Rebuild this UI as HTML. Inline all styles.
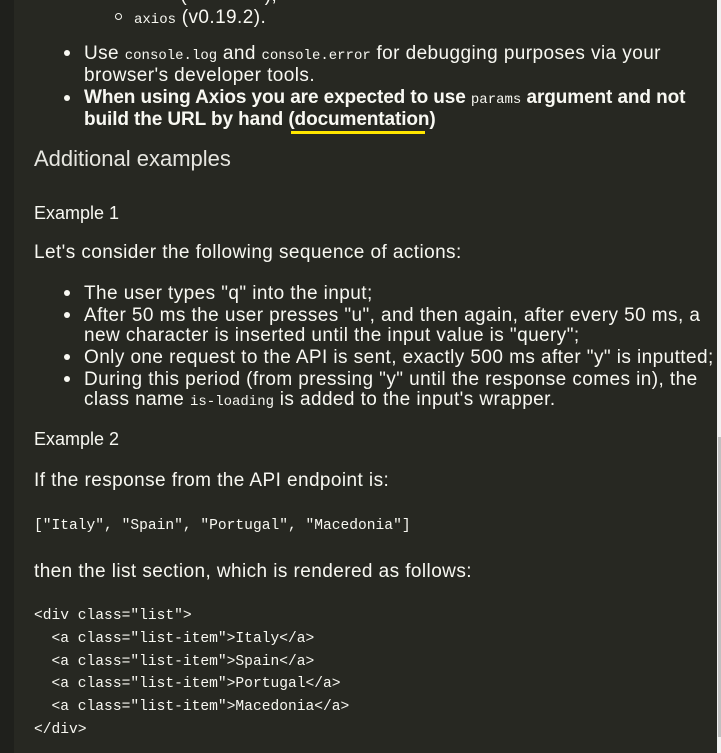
<!DOCTYPE html>
<html><head><meta charset="utf-8"><style>
html,body{margin:0;padding:0;width:721px;height:753px;overflow:hidden;background:#272822;}
body{position:relative;font-family:"Liberation Sans",sans-serif;color:#f8f8f2;}
.side{position:absolute;left:0;top:0;width:14px;height:753px;background:#1f201c;}
.sb{position:absolute;left:717px;top:0;width:4px;height:753px;background:#f1f1f1;}
.th{position:absolute;left:718px;top:437px;width:3px;height:300px;background:#c1c1c1;}
.t{position:absolute;white-space:nowrap;font-size:19px;letter-spacing:0.42px;line-height:22px;}
code{font-family:"Liberation Mono",monospace;font-size:14px;letter-spacing:0;font-weight:normal;}
.b{position:absolute;width:6px;height:6px;border-radius:50%;background:#f8f8f2;}
.m{position:absolute;white-space:pre;font-family:"Liberation Mono",monospace;font-size:14.6px;line-height:22.8px;}
</style></head><body>
<div class="side"></div>
<div class="sb"></div><div class="th"></div>
<div class="t" style="left:97px;top:-15px">———— (————),</div>
<div style="position:absolute;left:115px;top:13px;width:5px;height:5px;border:1.3px solid #f8f8f2;border-radius:50%"></div>
<div class="t" style="left:134px;top:7px"><code>axios</code> (v0.19.2).</div>
<div class="b" style="left:64px;top:50px"></div>
<div class="t" style="left:84px;top:43px">Use <code>console.log</code> and <code>console.error</code> for debugging purposes via your</div>
<div class="t" style="left:84px;top:65px">browser's developer tools.</div>
<div class="b" style="left:64px;top:95px"></div>
<div class="t" style="left:84px;top:87px;font-weight:bold;letter-spacing:-0.1px">When using Axios you are expected to use <code>params</code> argument and not</div>
<div class="t" style="left:84px;top:109px;font-weight:bold;letter-spacing:-0.1px">build the URL by hand (documentation)</div>
<div style="position:absolute;left:291px;top:131px;width:134px;height:3px;background:#ffe600"></div>
<div class="t" style="left:34px;top:148px;font-size:22px;letter-spacing:0;color:#e6e6e0">Additional examples</div>
<div class="t" style="left:34px;top:202px;font-size:18px;letter-spacing:0">Example 1</div>
<div class="t" style="left:34px;top:242px">Let's consider the following sequence of actions:</div>
<div class="b" style="left:64px;top:290px"></div>
<div class="t" style="left:84px;top:283px">The user types "q" into the input;</div>
<div class="b" style="left:64px;top:312px"></div>
<div class="t" style="left:84px;top:305px">After 50 ms the user presses "u", and then again, after every 50 ms, a</div>
<div class="t" style="left:84px;top:325px">new character is inserted until the input value is "query";</div>
<div class="b" style="left:64px;top:354px"></div>
<div class="t" style="left:84px;top:347px">Only one request to the API is sent, exactly 500 ms after "y" is inputted;</div>
<div class="b" style="left:64px;top:376px"></div>
<div class="t" style="left:84px;top:369px">During this period (from pressing "y" until the response comes in), the</div>
<div class="t" style="left:84px;top:389px">class name <code>is-loading</code> is added to the input's wrapper.</div>
<div class="t" style="left:34px;top:428px;font-size:18px;letter-spacing:0">Example 2</div>
<div class="t" style="left:34px;top:470px">If the response from the API endpoint is:</div>
<div class="m" style="left:34px;top:515px">["Italy", "Spain", "Portugal", "Macedonia"]</div>
<div class="t" style="left:34px;top:561px">then the list section, which is rendered as follows:</div>
<div class="m" style="left:34px;top:605px">&lt;div class="list"&gt;
  &lt;a class="list-item"&gt;Italy&lt;/a&gt;
  &lt;a class="list-item"&gt;Spain&lt;/a&gt;
  &lt;a class="list-item"&gt;Portugal&lt;/a&gt;
  &lt;a class="list-item"&gt;Macedonia&lt;/a&gt;
&lt;/div&gt;</div>
</body></html>
